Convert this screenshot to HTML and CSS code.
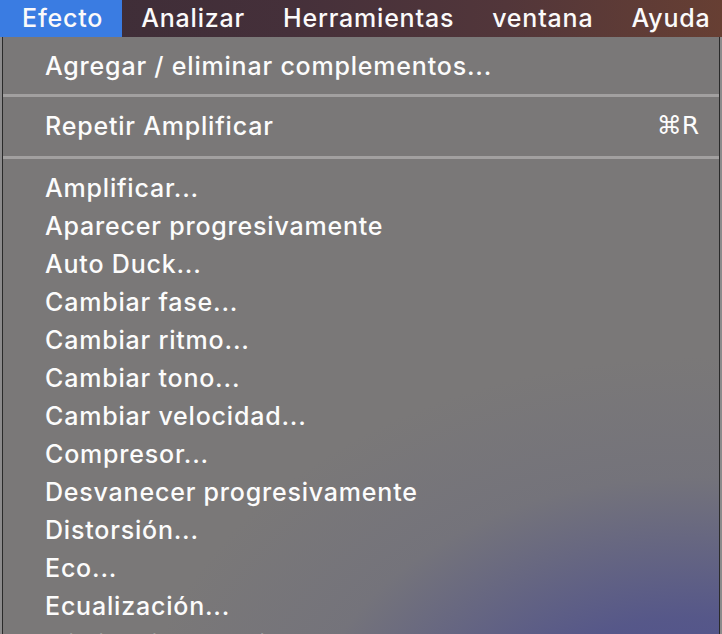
FILE: index.html
```html
<!DOCTYPE html>
<html lang="es">
<head>
<meta charset="utf-8">
<title>Efecto</title>
<link rel="stylesheet" href="styles.css">
</head>
<body>
<div class="screen">
  <nav class="menubar">
    <span class="mb-item active">Efecto</span>
    <span class="mb-item">Analizar</span>
    <span class="mb-item">Herramientas</span>
    <span class="mb-item">ventana</span>
    <span class="mb-item">Ayuda</span>
  </nav>
  <div class="menu">
    <div class="item">Agregar / eliminar complementos...</div>
    <div class="sep"></div>
    <div class="item"><span>Repetir Amplificar</span><span class="shortcut">⌘R</span></div>
    <div class="sep"></div>
    <div class="item">Amplificar...</div>
    <div class="item">Aparecer progresivamente</div>
    <div class="item">Auto Duck...</div>
    <div class="item">Cambiar fase...</div>
    <div class="item">Cambiar ritmo...</div>
    <div class="item">Cambiar tono...</div>
    <div class="item">Cambiar velocidad...</div>
    <div class="item">Compresor...</div>
    <div class="item">Desvanecer progresivamente</div>
    <div class="item">Distorsión...</div>
    <div class="item">Eco...</div>
    <div class="item">Ecualización...</div>
    <div class="item">Eliminación de clics...</div>
  </div>
</div>
</body>
</html>
```
FILE: styles.css
```css
html, body {
  margin: 0;
  padding: 0;
  height: 100%;
  overflow: hidden;
}
body {
  background: #8c8b8c;
  font-family: Inter, "Liberation Sans", sans-serif;
  font-weight: 500;
  color: #fff;
}
.screen {
  width: 722px;
  height: 634px;
  display: flex;
  flex-direction: column;
}
.menubar {
  height: 37px;
  flex: none;
  display: flex;
  align-items: stretch;
  background: linear-gradient(to right, #3b2c36 0%, #45303a 40%, #52363a 70%, #673f33 100%);
  font-size: 25px;
  letter-spacing: 0.8px;
}
.mb-item {
  display: flex;
  align-items: center;
  padding: 0 19px 1px;
  color: #fbfafa;
}
.mb-item:first-child {
  padding-left: 22px;
  padding-right: 19px;
}
.mb-item.active {
  background: #3a7ce2;
}
.menu {
  flex: 1;
  margin: 0 2px 0 2px;
  border-left: 1px solid #2a2a2a;
  border-right: 1px solid #2a2a2a;
  padding-top: 10px;
  overflow: hidden;
  background:
    radial-gradient(ellipse 560px 400px at 690px 720px, rgba(74,76,146,1) 0%, rgba(80,82,140,0.85) 35%, rgba(105,106,128,0.35) 70%, rgba(122,120,120,0) 100%),
    #7a7878;
  font-size: 25px;
  letter-spacing: 0.8px;
}
.item {
  height: 38px;
  display: flex;
  align-items: center;
  justify-content: space-between;
  padding: 0 20px 1px 42px;
  box-sizing: border-box;
  white-space: nowrap;
  color: #fcfcfc;
}
.shortcut {
  font-family: "DejaVu Sans", Inter, sans-serif;
  font-weight: 400;
  letter-spacing: 0;
}
.sep {
  height: 3px;
  background: #a2a0a0;
  margin: 9px 0 10px;
}
.sep + .item + .sep {
  margin-top: 11px;
}
```
